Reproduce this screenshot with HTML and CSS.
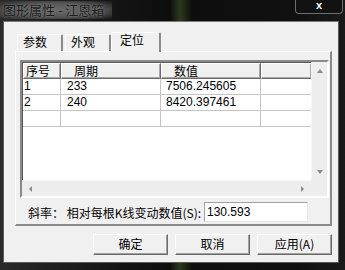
FILE: index.html
```html
<!DOCTYPE html>
<html>

<head>
    <title>图形属性 - 江恩箱</title>
    <meta charset='utf-8'>
    <link rel="stylesheet" href="styles.css">
</head>

<body>
    <div class='window'>
        <div class='titlebar'>
            <span class='title'>图形属性 - 江恩箱</span>
            <span class='close'>x</span>
        </div>

        <div class='client'>
            <div class='tabs'>
                <div class='tab'>参数</div>
                <div class='tab'>外观</div>
                <div class='tab active'>定位</div>
            </div>

            <div class='panel'>
                <div class='listview'>
                    <div class='grid'>
                        <div class='row head'>
                            <div class='c c1'>序号</div>
                            <div class='c c2'>周期</div>
                            <div class='c c3'>数值</div>
                            <div class='c c4'></div>
                        </div>
                        <div class='row'>
                            <div class='c c1'>1</div>
                            <div class='c c2'>233</div>
                            <div class='c c3'>7506.245605</div>
                            <div class='c c4'></div>
                        </div>
                        <div class='row'>
                            <div class='c c1'>2</div>
                            <div class='c c2'>240</div>
                            <div class='c c3'>8420.397461</div>
                            <div class='c c4'></div>
                        </div>
                        <div class='row'>
                            <div class='c c1'></div>
                            <div class='c c2'></div>
                            <div class='c c3'></div>
                            <div class='c c4'></div>
                        </div>
                    </div>
                    <div class='vscroll'>
                        <span class='arrow up'></span>
                        <span class='arrow down'></span>
                    </div>
                    <div class='hscroll'>
                        <span class='arrow left'></span>
                        <span class='arrow right'></span>
                    </div>
                    <div class='corner'></div>
                </div>

                <div class='slope'>
                    <span class='slope-label'>斜率： 相对每根K线变动数值(S):</span>
                    <input class='slope-input' type='text' value='130.593'>
                </div>
            </div>

            <div class='buttons'>
                <div class='btn'>确定</div>
                <div class='btn'>取消</div>
                <div class='btn'>应用(A)</div>
            </div>
        </div>
    </div>
</body>

</html>
```

FILE: styles.css
```css
body {
    margin: 0;
    padding: 0;
    background: #0b0b0b;
    font-family: "Liberation Sans", "Noto Sans CJK SC", sans-serif;
    font-size: 12px;
    color: #000
}

.window {
    width: 345px;
    height: 270px;
    background: linear-gradient(90deg, #2a2a2a 0px, #151515 110px, #0d0d0d 170px, #2b3a1c 180px, #0d0d0d 192px, #111 300px, #1a1a1a 345px);
    overflow: hidden
}

.titlebar {
    height: 21px;
    display: flex;
    justify-content: space-between;
    align-items: flex-start
}

.title {
    margin: 1px 0 0 0;
    padding: 1px 8px 1px 3px;
    font-family: "Noto Sans CJK SC", sans-serif;
    font-size: 13px;
    line-height: 16px;
    color: #1c1c1c;
    background: radial-gradient(ellipse at center, #6a6a6a 0%, #555 55%, rgba(60, 60, 60, 0) 100%);
    text-shadow: 0 0 2px #8a8a8a
}

.close {
    width: 46px;
    height: 13px;
    margin-right: 2px;
    border: 1px solid #6e6e6e;
    border-top: 0;
    border-radius: 0 0 4px 4px;
    background: #121212;
    color: #fff;
    font-weight: bold;
    font-size: 11px;
    line-height: 11px;
    text-align: center
}

.client {
    width: 336px;
    height: 242px;
    margin-left: 3px;
    padding: 10px 0 0 11px;
    box-sizing: border-box;
    background: #f0f0f0;
    border: 1px solid #5a5a5a;
    border-top-color: #7a7a7a
}

.tabs {
    display: flex;
    align-items: flex-end;
    height: 19px;
    margin-left: 2px;
    position: relative;
    z-index: 1
}

.tab {
    width: 46px;
    height: 17px;
    box-sizing: border-box;
    padding: 1px 0 0 5px;
    line-height: 15px;
    border: 1px solid #fff;
    border-right: 2px solid #8a8a8a;
    border-bottom: 0;
    border-radius: 2px 2px 0 0;
    background: #f0f0f0;
    margin-right: 2px
}

.tab.active {
    width: 50px;
    height: 20px;
    margin: 0 0 -1px -2px;
    padding-top: 0;
    padding-left: 8px;
    line-height: 17px;
    background: #f0f0f0
}

.panel {
    width: 317px;
    height: 175px;
    box-sizing: border-box;
    border: 1px solid #fff;
    border-right: 2px solid #8a8a8a;
    border-bottom: 2px solid #8a8a8a;
    padding: 8px 0 0 4px
}

.listview {
    display: grid;
    grid-template-columns: 289px 16px;
    grid-template-rows: 118px 16px;
    width: 309px;
    box-sizing: border-box;
    border: 2px solid;
    border-color: #8a8a8a #fff #fff #8a8a8a;
    box-shadow: inset 1px 1px 0 #5a5a5a;
    background: #fff
}

.grid {
    overflow: hidden;
    padding: 1px 0 0 1px
}

.row {
    display: grid;
    grid-template-columns: 38px 100px 100px 51px;
    height: 16px
}

.c {
    box-sizing: border-box;
    border-right: 1px solid #c4c4c4;
    border-bottom: 1px solid #c4c4c4;
    line-height: 15px;
    white-space: nowrap;
    overflow: hidden
}

.c1 {
    padding-left: 1px
}

.c2 {
    padding-left: 6px
}

.c3 {
    padding-left: 5px
}

.head .c {
    background: #f0f0f0;
    border: 1px solid;
    border-color: #fff #6a6a6a #6a6a6a #fff;
    box-shadow: inset -1px -1px 0 #a8a8a8;
    font-family: "Noto Sans CJK SC", sans-serif;
    line-height: 13px;
    padding-left: 12px
}

.head .c1 {
    padding-left: 2px
}

.vscroll,
.hscroll,
.corner {
    background: #ededed;
    display: flex;
    justify-content: space-between;
    align-items: center
}

.vscroll {
    flex-direction: column;
    padding: 7px 0 6px;
    box-sizing: border-box;
    border-left: 1px solid #f8f8f8
}

.hscroll {
    padding: 0 7px;
    border-top: 1px solid #f8f8f8
}

.arrow {
    width: 0;
    height: 0;
    border: 3px solid transparent
}

.arrow.up {
    border-bottom: 4px solid #8a8a8a;
    border-top-width: 0
}

.arrow.down {
    border-top: 4px solid #8a8a8a;
    border-bottom-width: 0
}

.arrow.left {
    border-right: 3px solid #8a8a8a;
    border-left-width: 0
}

.arrow.right {
    border-left: 3px solid #8a8a8a;
    border-right-width: 0
}

.slope {
    display: flex;
    align-items: center;
    margin-top: 4px;
    padding-left: 8px
}

.slope-label {
    font-family: "Noto Sans CJK SC", sans-serif;
    width: 176px
}

.slope-input {
    width: 104px;
    height: 20px;
    box-sizing: border-box;
    margin: 0;
    padding: 0 0 0 2px;
    border: 1px solid;
    border-color: #a0a0a0 #e8e8e8 #e8e8e8 #a0a0a0;
    background: #fff;
    font-family: "Liberation Sans", sans-serif;
    font-size: 12px;
    line-height: 16px;
    outline: none
}

.buttons {
    display: flex;
    justify-content: flex-end;
    gap: 7px;
    width: 317px;
    margin-top: 8px
}

.btn {
    width: 75px;
    height: 21px;
    box-sizing: border-box;
    border: 1px solid;
    border-color: #fff #6a6a6a #6a6a6a #fff;
    box-shadow: inset -1px -1px 0 #a0a0a0;
    background: #f0f0f0;
    text-align: center;
    line-height: 18px;
    font-family: "Noto Sans CJK SC", sans-serif
}
```
